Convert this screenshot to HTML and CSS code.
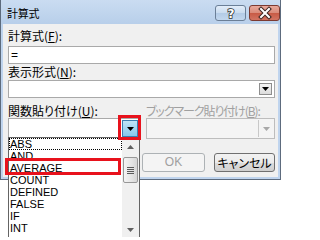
FILE: index.html
```html
<!DOCTYPE html>
<html lang="ja">
<head>
<meta charset="utf-8">
<link rel="stylesheet" href="styles.css">
</head>
<body>
<div class="window">
  <div class="titlebar">
    <span class="title">計算式</span>
    <div class="caption-btns">
      <span class="cap help"><svg width="28" height="14" viewBox="0 0 28 14"><text x="14" y="12" text-anchor="middle" class="q">?</text></svg></span>
      <span class="cap close"><svg width="28" height="14" viewBox="0 0 28 14"><path d="M10 3 L18 11 M18 3 L10 11" class="x-out"/><path d="M10 3 L18 11 M18 3 L10 11" class="x-in"/></svg></span>
    </div>
  </div>
  <div class="client">
    <div class="label">計算式(<u>F</u>):</div>
    <div class="textbox">=</div>
    <div class="label">表示形式(<u>N</u>):</div>
    <div class="combo wide">
      <span class="arrow-btn"><svg width="7" height="4" viewBox="0 0 7 4"><path d="M0 0H7L3.5 4Z" fill="#000"/></svg></span>
    </div>
    <div class="row">
      <div class="col left">
        <div class="label">関数貼り付け(<u>U</u>):</div>
        <div class="combo tall">
          <span class="arrow-btn pressed"><svg width="7" height="4" viewBox="0 0 7 4"><path d="M0 0H7L3.5 4Z" fill="#000"/></svg></span>
        </div>
      </div>
      <div class="col right">
        <div class="label disabled narrow">ブックマーク貼り付け(<u>B</u>):</div>
        <div class="combo tall off">
          <span class="arrow-btn dis"><svg width="7" height="4" viewBox="0 0 7 4"><path d="M0 0H7L3.5 4Z" fill="#a8a8a8"/></svg></span>
        </div>
      </div>
    </div>
    <div class="buttons">
      <button class="btn ok" disabled>OK</button>
      <button class="btn cancel">キャンセル</button>
    </div>
  </div>
</div>

<div class="listbox">
  <ul class="items">
    <li class="focus">ABS</li>
    <li>AND</li>
    <li>AVERAGE</li>
    <li>COUNT</li>
    <li>DEFINED</li>
    <li>FALSE</li>
    <li>IF</li>
    <li>INT</li>
  </ul>
  <div class="scrollbar">
    <div class="sb-arrow"><svg width="7" height="4" viewBox="0 0 7 4"><path d="M0 4H7L3.5 0Z" fill="#606060"/></svg></div>
    <div class="thumb"><span></span><span></span><span></span><span></span></div>
    <div class="sb-fill"></div>
    <div class="sb-arrow"><svg width="7" height="4" viewBox="0 0 7 4"><path d="M0 0H7L3.5 4Z" fill="#606060"/></svg></div>
  </div>
</div>

<div class="hl hl-btn"></div>
<div class="hl hl-item"></div>
</body>
</html>
```

FILE: styles.css
```css
html, body {
  margin: 0;
  padding: 0;
  background: #ffffff;
}
body {
  width: 284px;
  height: 237px;
  overflow: hidden;
  position: relative;
  font-family: "Noto Sans CJK JP", "Liberation Sans", sans-serif;
  font-size: 12px;
  color: #000;
}
.window {
  width: 279px;
  height: 179px;
  border: 1px solid #5d6b7d;
  border-top: none;
  background: #bfd4ee;
  display: flex;
  flex-direction: column;
}
.titlebar {
  height: 24px;
  display: flex;
  align-items: flex-start;
  justify-content: space-between;
  background: linear-gradient(#cadcf1, #b8cfea);
}
.title {
  font-size: 11px;
  line-height: 14px;
  margin: 6px 0 0 6px;
  letter-spacing: -0.2px;
}
.caption-btns {
  display: flex;
  gap: 3px;
  margin-top: 5px;
  margin-right: 0;
}
.cap {
  width: 31px;
  height: 16px;
  box-sizing: border-box;
  border: 1px solid #6b7f97;
  border-radius: 3px;
  display: flex;
  align-items: center;
  justify-content: center;
}
.help {
  background: linear-gradient(#e2edf9 0%, #c9dbef 50%, #b3cbe6 51%, #c2d7ee 100%);
}
.close {
  border-color: #7c3a31;
  background: linear-gradient(#e9a99b 0%, #d98a79 50%, #c75a45 51%, #d27462 100%);
}
.q {
  font-family: "DejaVu Sans", sans-serif;
  font-weight: bold;
  font-size: 12px;
  fill: #fff;
  stroke: #333;
  stroke-width: 1.6px;
  paint-order: stroke;
}
.x-out {
  stroke: #3b2420;
  stroke-width: 4;
  stroke-linecap: square;
  fill: none;
}
.x-in {
  stroke: #fff;
  stroke-width: 2;
  stroke-linecap: square;
  fill: none;
}
.client {
  flex: 1;
  margin: 0 2px 2px 2px;
  background: #f0f0f0;
  padding: 5px 3px 0 5px;
}
.label {
  line-height: 14px;
  height: 14px;
  white-space: nowrap;
  font-feature-settings: "palt";
}
.label u {
  text-decoration-thickness: 1px;
  text-underline-offset: 1px;
}
.label.disabled {
  color: #a0a0a0;
}
.label.narrow {
  letter-spacing: -1.1px;
}
.textbox {
  margin-top: 3px;
  height: 18px;
  box-sizing: border-box;
  border: 1px solid #a9a9a9;
  background: #fff;
  font-family: "Liberation Sans", sans-serif;
  font-size: 12px;
  line-height: 16px;
  padding-left: 2px;
  margin-bottom: 1px;
}
.combo {
  box-sizing: border-box;
  border: 1px solid #a9a9a9;
  background: #fff;
  display: flex;
  justify-content: flex-end;
  align-items: center;
}
.combo.wide {
  margin-top: 1px;
  height: 18px;
  padding-right: 2px;
}
.combo.tall {
  height: 21px;
  padding-right: 1px;
}
.combo.off {
  background: #f4f4f4;
  border-color: #bdbdbd;
  padding-right: 1px;
}
.arrow-btn {
  width: 13px;
  height: 12px;
  box-sizing: border-box;
  border: 1px solid #8e8e8e;
  background: linear-gradient(#f4f4f4, #dcdcdc);
  display: flex;
  align-items: center;
  justify-content: center;
}
.arrow-btn.pressed {
  width: 16px;
  height: 17px;
  border-color: #3c7fb1;
  background: linear-gradient(#bfe5f8, #86c7ec);
}
.arrow-btn.dis {
  width: 15px;
  height: 17px;
  border: none;
  border-left: 1px solid #c8c8c8;
  background: #f4f4f4;
}
.row {
  display: flex;
  gap: 6px;
  margin-top: 6px;
}
.col.left {
  width: 132px;
}
.col.right {
  width: 129px;
}
.buttons {
  display: flex;
  justify-content: flex-end;
  gap: 9px;
  margin-top: 14px;
  padding-right: 0;
}
.btn {
  height: 19px;
  box-sizing: border-box;
  border: 1px solid #707070;
  border-radius: 3px;
  background: linear-gradient(#f2f2f2 0%, #ebebeb 50%, #dddddd 51%, #cfcfcf 100%);
  font-family: "Noto Sans CJK JP", sans-serif;
  font-size: 12px;
  line-height: 15px;
  padding: 0;
  color: #000;
  font-feature-settings: "palt";
}
.btn.ok {
  width: 63px;
  border-color: #adb2b5;
  background: #f4f4f4;
  color: #a0a0a0;
  font-family: "Liberation Sans", sans-serif;
}
.btn.cancel {
  width: 61px;
}
.listbox {
  position: absolute;
  left: 8px;
  top: 137px;
  width: 132px;
  height: 110px;
  box-sizing: border-box;
  border: 1px solid #646464;
  background: #fff;
  display: flex;
}
.items {
  list-style: none;
  margin: 0;
  padding: 0;
  flex: 1;
  font-family: "Liberation Sans", sans-serif;
  font-size: 11px;
}
.items li {
  height: 12px;
  line-height: 12px;
  padding-left: 1px;
  box-sizing: border-box;
}
.items li.focus {
  outline: 1px dotted #000;
  outline-offset: -1px;
}
.scrollbar {
  width: 17px;
  background: #f0f0f0;
  display: flex;
  flex-direction: column;
  align-items: center;
}
.sb-arrow {
  height: 17px;
  width: 17px;
  display: flex;
  align-items: center;
  justify-content: center;
}
.thumb {
  margin-top: 2px;
  width: 15px;
  height: 26px;
  box-sizing: border-box;
  border: 1px solid #979797;
  border-radius: 2px;
  background: linear-gradient(90deg, #f4f4f4, #e4e4e4 60%, #d6d6d6);
  display: flex;
  flex-direction: column;
  align-items: center;
  justify-content: center;
  gap: 1px;
}
.thumb span {
  width: 7px;
  height: 1px;
  background: #5a5a5a;
}
.sb-fill {
  flex: 1;
  max-height: 38px;
}
.hl {
  position: absolute;
  box-sizing: border-box;
  border: 3px solid #e8121c;
}
.hl-btn {
  left: 118px;
  top: 115px;
  width: 23px;
  height: 25px;
}
.hl-item {
  left: 5px;
  top: 158px;
  width: 116px;
  height: 17px;
}
```
